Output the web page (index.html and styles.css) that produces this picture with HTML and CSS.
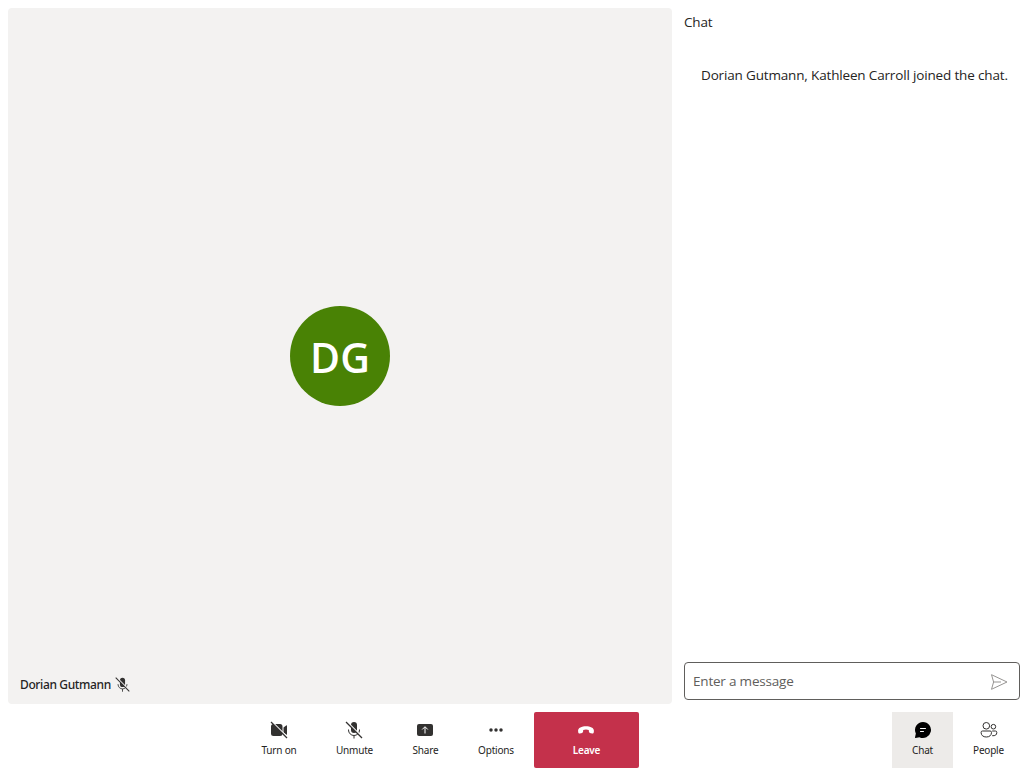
FILE: index.html
```html
<!DOCTYPE html>
<html lang="en">
<head>
<meta charset="utf-8">
<title>Call</title>
<link rel="stylesheet" href="styles.css">
</head>
<body>
<div class="app">
  <main class="content">
    <section class="tile">
      <div class="avatar"><span>DG</span></div>
      <div class="name"><span class="name-text">Dorian Gutmann</span>
        <svg class="mic-small" viewBox="0 0 20 20"><path fill="#323130" d="M7 5a3 3 0 0 1 6 0v5a3 3 0 0 1-6 0z"/><path d="M4.800 9.500v.5a5.200 5.200 0 0 0 10.400 0v-.5M10 15.200V18.500" fill="none" stroke="#323130"/><path d="M2.800 1.500l16 16" stroke="#f3f2f1" stroke-width="1.500"/><path d="M2 2l16 16" stroke="#323130" stroke-width="1.200"/></svg>
      </div>
    </section>
    <aside class="chat">
      <h1 class="chat-title"><span>Chat</span></h1>
      <p class="notice"><span>Dorian Gutmann, Kathleen Carroll joined the chat.</span></p>
      <div class="composer"><span class="placeholder">Enter a message</span>
        <svg class="send" viewBox="0 0 20 20"><path d="M2.500 2.700L18 10 2.500 17.300 4.600 10zM4.600 10H12" fill="none" stroke="#979593" stroke-linejoin="round"/></svg>
      </div>
    </aside>
  </main>
  <footer class="bar">
    <div class="controls">
      <button class="btn turn-on"><svg viewBox="0 0 20 20"><path fill="#323130" d="M2 6.500A2.500 2.500 0 0 1 4.500 4H11a2.500 2.500 0 0 1 2.500 2.500v7A2.500 2.500 0 0 1 11 16H4.500A2.500 2.500 0 0 1 2 13.500zM14.500 7.600l2.700-2.200q.8-.5.800.4v8.400q0 .9-.8.400l-2.700-2.200z"/><path d="M2.700 1.600l16 16" stroke="#fff" stroke-width="1.500"/><path d="M2 2l16 16" stroke="#323130" stroke-width="1.200"/></svg><span>Turn on</span></button>
      <button class="btn unmute"><svg viewBox="0 0 20 20"><path fill="#323130" d="M7 5a3 3 0 0 1 6 0v5a3 3 0 0 1-6 0z"/><path d="M4.500 9.500v.5a5.500 5.500 0 0 0 11 0v-.5M10 15.500v3" fill="none" stroke="#323130"/><path d="M2.800 1.500l16 16" stroke="#fff" stroke-width="1.500"/><path d="M2 2l16 16" stroke="#323130" stroke-width="1.200"/></svg><span>Unmute</span></button>
      <button class="btn share"><svg viewBox="0 0 20 20"><rect x="2" y="4" width="16" height="12" rx="2" fill="#323130"/><path d="M10 13.500V7M7.200 9.500L10 6.700l2.800 2.800" fill="none" stroke="#fff"/></svg><span>Share</span></button>
      <button class="btn options"><svg viewBox="0 0 20 20" fill="#323130"><circle cx="5" cy="10" r="1.750"/><circle cx="10" cy="10" r="1.750"/><circle cx="15" cy="10" r="1.750"/></svg><span>Options</span></button>
      <button class="btn leave"><svg viewBox="0 0 20 20"><path fill="#fff" d="M2.100 11.200C1.700 7.700 6 6.300 10 6.300s8.300 1.400 7.900 4.900l-.2 1.200c-.1.800-.8 1.200-1.600 1l-2.200-.5c-.7-.2-1-.6-1-1.300l-.1-1.500c-1.700-.7-3.900-.7-5.600 0l-.1 1.500c0 .7-.4 1.100-1 1.300l-2.200.5c-.8.200-1.500-.2-1.600-1z"/></svg><span>Leave</span></button>
    </div>
    <div class="panes">
      <button class="btn chat-btn"><svg viewBox="0 0 20 20"><path fill="#000" d="M10 2a8 8 0 1 1-3.600 15.150L2.600 18q-.7.100-.6-.6l.85-3.800A8 8 0 0 1 10 2z"/><path d="M7.500 8.500h5M7.500 11.500h3" stroke="#fff" stroke-linecap="round"/></svg><span>Chat</span></button>
      <button class="btn people"><svg viewBox="0 0 20 20" fill="none" stroke="#323130"><circle cx="7.300" cy="5.800" r="3.300"/><circle cx="14.400" cy="6.700" r="2.300"/><path d="M3.500 11h7.600q1.400 0 1.400 1.400c0 3-2.100 4.600-5.200 4.600s-5.200-1.600-5.200-4.600q0-1.400 1.400-1.400zM13.200 11h3.200q1.400 0 1.400 1.400c0 2.500-1.500 3.600-4.600 3.300"/></svg><span>People</span></button>
    </div>
  </footer>
</div>
</body>
</html>
```
FILE: styles.css
```css
* { box-sizing: border-box; }
body { margin: 0; background: #fff; color: #252423; font-family: "Open Sans", "Noto Sans", sans-serif; font-size: 13.5px; letter-spacing: -0.16px; }
.app { width: 1024px; height: 768px; display: flex; flex-direction: column; overflow: hidden; }
.content { height: 712px; display: flex; padding: 8px 4px 8px 8px; gap: 12px; }
.tile { width: 664px; height: 696px; background: #f3f2f1; border-radius: 4px; display: grid; grid-template: 1fr / 1fr; }
.tile > * { grid-area: 1 / 1; }
.avatar { place-self: center; width: 100px; height: 100px; border-radius: 50%; background: #498205; color: #fff; display: flex; align-items: center; justify-content: center; font-size: 41px; font-weight: 600; line-height: 48px; letter-spacing: 0; padding-top: 2px; }
.name { align-self: end; display: flex; align-items: center; gap: 3px; padding: 0 0 10px 12px; font-family: "Noto Sans", sans-serif; font-size: 12px; font-weight: 500; line-height: 18px; }
.name-text { width: 91px; white-space: nowrap; letter-spacing: -0.37px; }
.mic-small { width: 17px; height: 17px; margin: -1px 0 1px; }
.chat { width: 336px; display: flex; flex-direction: column; }
.chat-title { margin: 4px 0 0; font-size: 13.5px; font-weight: 400; line-height: 20px; }
.notice { margin: 33px 0 0 17px; line-height: 20px; white-space: nowrap; }
.composer { margin-top: auto; margin-bottom: 4px; height: 38px; border: 1px solid #605e5c; border-radius: 4px; display: flex; align-items: center; justify-content: space-between; padding: 0 10px 0 8px; color: #605e5c; }
.placeholder { letter-spacing: -0.2px; }
.send { width: 20px; height: 20px; margin-top: 1px; }
.bar { height: 56px; display: flex; justify-content: space-between; padding: 0 0 0 244px; }
.controls, .panes { display: flex; }
.btn { border: 0; padding: 8px 0 0; background: none; color: #252423; font-family: "Noto Sans", sans-serif; font-size: 10px; letter-spacing: -0.2px; line-height: 20px; display: flex; flex-direction: column; align-items: center; height: 56px; white-space: nowrap; }
.btn svg { width: 20px; height: 20px; flex: none; }
.turn-on { width: 70px; }
.unmute { width: 81px; }
.share { width: 61px; }
.unmute svg, .share svg, .leave svg { margin-left: -1px; }
.options { width: 78px; padding-left: 2px; }
.leave { width: 105px; background: #c4314b; border-radius: 2px; color: #fff; font-weight: 600; }
.chat-btn { width: 61px; background: #edebe9; }
.people { width: 71px; }
```
